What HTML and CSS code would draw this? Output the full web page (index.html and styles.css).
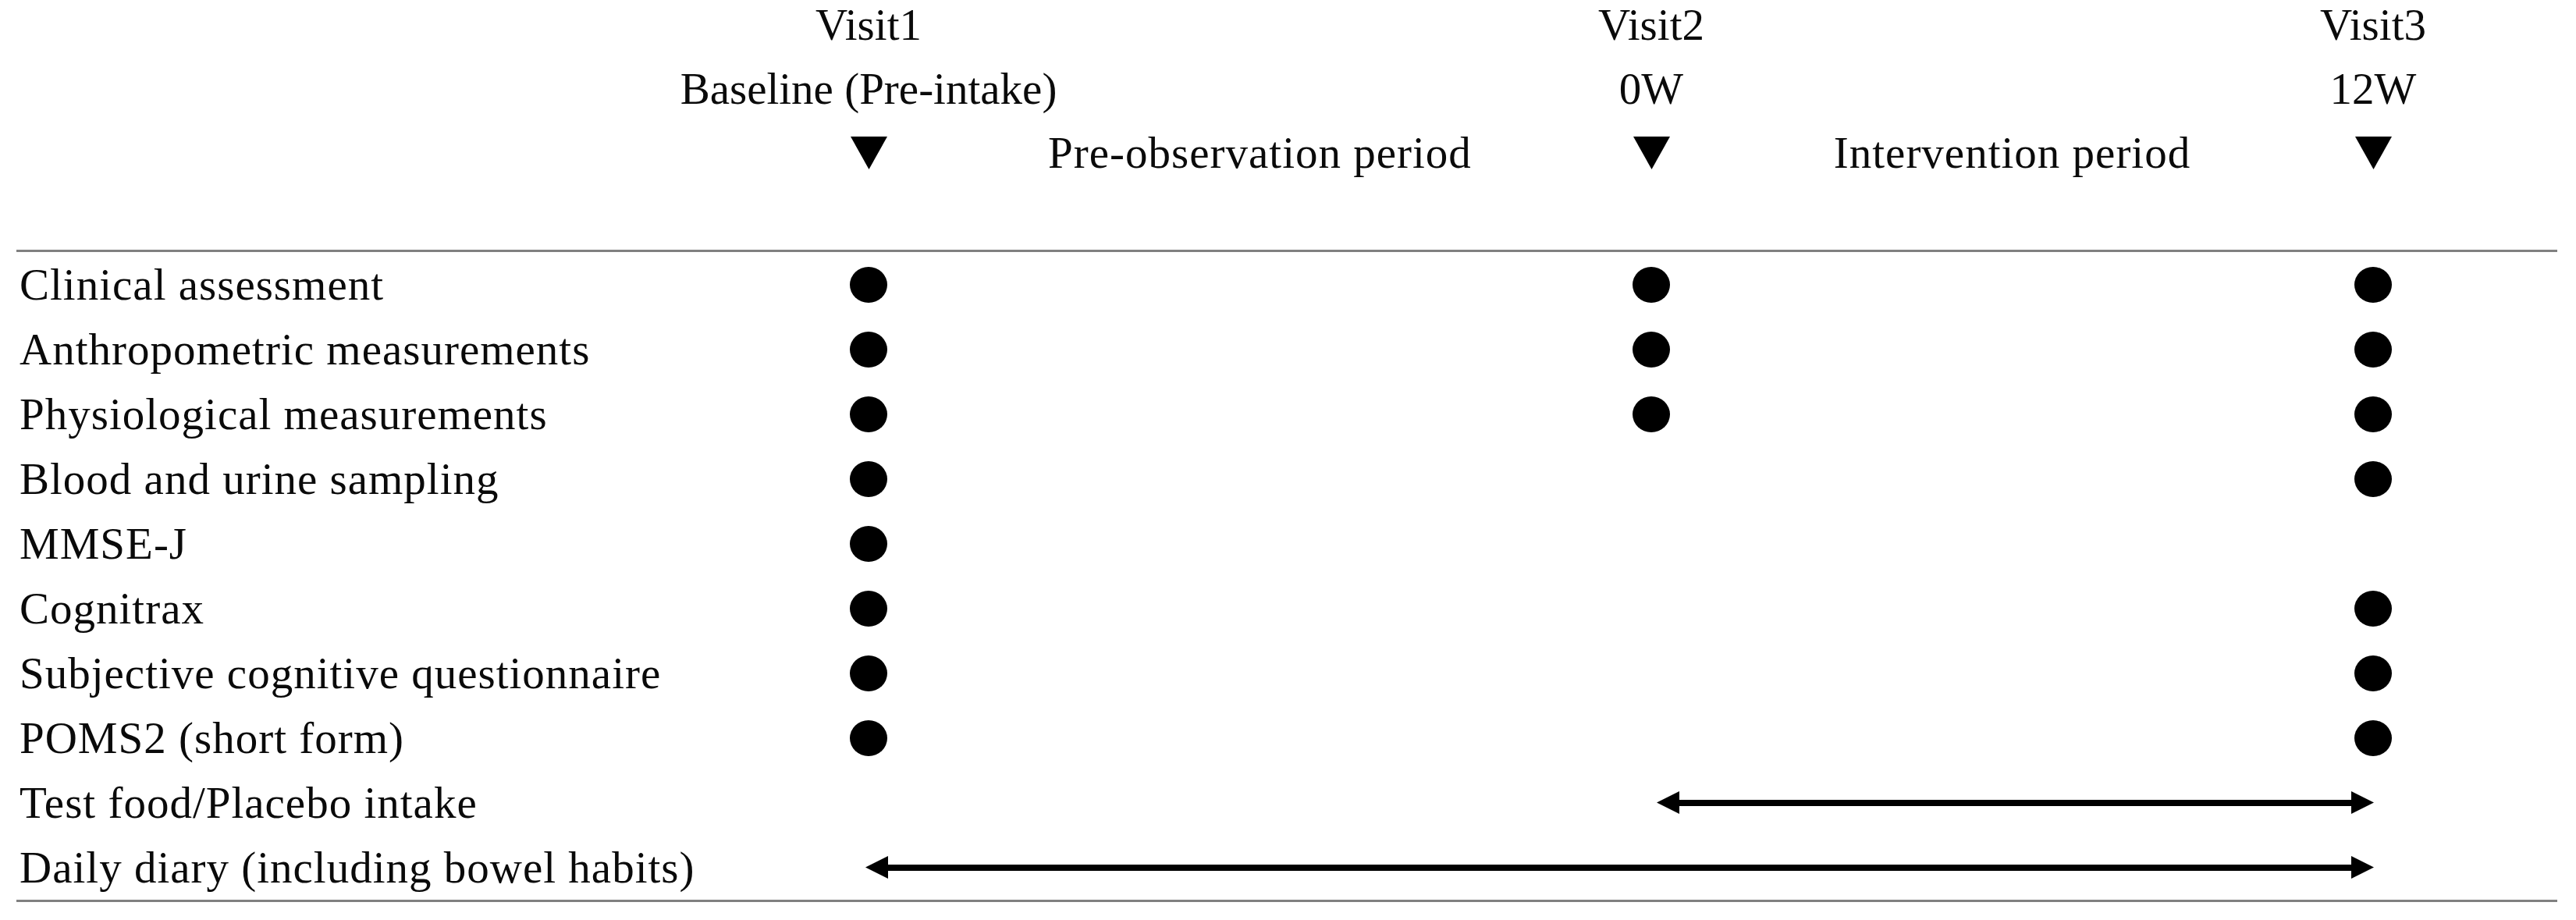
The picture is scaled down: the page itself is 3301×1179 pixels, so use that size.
FILE: index.html
```html
<!DOCTYPE html>
<html lang="en">
<head>
<meta charset="utf-8">
<title>Study schedule</title>
<link rel="stylesheet" href="styles.css">
</head>
<body>
<div class="schedule">
  <div class="head grid">
    <div class="hcell c2 r1">Visit1</div>
    <div class="hcell c4 r1">Visit2</div>
    <div class="hcell c6 r1">Visit3</div>
    <div class="hcell c2 r2">Baseline (Pre-intake)</div>
    <div class="hcell c4 r2">0W</div>
    <div class="hcell c6 r2">12W</div>
    <div class="hcell c2 r3"><svg class="tri" width="47" height="42" viewBox="0 0 47 42"><polygon points="0,0 47,0 23.5,42"/></svg></div>
    <div class="hcell c3 r3 period">Pre-observation period</div>
    <div class="hcell c4 r3"><svg class="tri" width="47" height="42" viewBox="0 0 47 42"><polygon points="0,0 47,0 23.5,42"/></svg></div>
    <div class="hcell c5 r3 period">Intervention period</div>
    <div class="hcell c6 r3"><svg class="tri" width="47" height="42" viewBox="0 0 47 42"><polygon points="0,0 47,0 23.5,42"/></svg></div>
  </div>
  <div class="table">
    <div class="row grid"><div class="label">Clinical assessment</div><span class="dot c2"></span><span class="dot c4"></span><span class="dot c6"></span></div>
    <div class="row grid"><div class="label">Anthropometric measurements</div><span class="dot c2"></span><span class="dot c4"></span><span class="dot c6"></span></div>
    <div class="row grid"><div class="label">Physiological measurements</div><span class="dot c2"></span><span class="dot c4"></span><span class="dot c6"></span></div>
    <div class="row grid"><div class="label">Blood and urine sampling</div><span class="dot c2"></span><span class="dot c6"></span></div>
    <div class="row grid"><div class="label">MMSE-J</div><span class="dot c2"></span></div>
    <div class="row grid"><div class="label">Cognitrax</div><span class="dot c2"></span><span class="dot c6"></span></div>
    <div class="row grid"><div class="label">Subjective cognitive questionnaire</div><span class="dot c2"></span><span class="dot c6"></span></div>
    <div class="row grid"><div class="label">POMS2 (short form)</div><span class="dot c2"></span><span class="dot c6"></span></div>
    <div class="row grid"><div class="label">Test food/Placebo intake</div>
      <div class="arrow span-intake">
        <svg class="head-l" width="29" height="29" viewBox="0 0 29 29"><polygon points="0,14.5 29,0 29,29"/></svg>
        <span class="shaft"></span>
        <svg class="head-r" width="29" height="29" viewBox="0 0 29 29"><polygon points="29,14.5 0,0 0,29"/></svg>
      </div>
    </div>
    <div class="row grid"><div class="label">Daily diary (including bowel habits)</div>
      <div class="arrow span-diary">
        <svg class="head-l" width="29" height="29" viewBox="0 0 29 29"><polygon points="0,14.5 29,0 29,29"/></svg>
        <span class="shaft"></span>
        <svg class="head-r" width="29" height="29" viewBox="0 0 29 29"><polygon points="29,14.5 0,0 0,29"/></svg>
      </div>
    </div>
  </div>
</div>
</body>
</html>
```
FILE: styles.css
```css
html, body {
  margin: 0;
  padding: 0;
  background: #ffffff;
}

body {
  font-family: "Liberation Serif", "Times New Roman", serif;
  font-size: 57px;
  color: #0a0a0a;
}

.schedule {
  width: 3256px;
  padding-left: 21px;
}

.grid {
  display: grid;
  grid-template-columns: 1042px 100px 903px 100px 825px 100px 186px;
}

.head {
  grid-template-rows: 64px 100px 64px;
  margin-bottom: 92px;
}

.hcell {
  justify-self: center;
  white-space: nowrap;
  display: flex;
  align-items: center;
  justify-content: center;
}

.period {
  letter-spacing: 1px;
}

.r1 { grid-row: 1; line-height: 64px; }
.r2 { grid-row: 2; line-height: 100px; }
.r3 { grid-row: 3; line-height: 64px; }

.c2 { grid-column: 2; }
.c3 { grid-column: 3; }
.c4 { grid-column: 4; }
.c5 { grid-column: 5; }
.c6 { grid-column: 6; }

.tri polygon {
  fill: #000000;
}

.table {
  border-top: 3px solid #808080;
  border-bottom: 3px solid #808080;
}

.row {
  height: 83px;
  align-items: center;
  line-height: 83px;
}

.label {
  grid-column: 1;
  grid-row: 1;
  padding-left: 4px;
  white-space: nowrap;
  letter-spacing: 1px;
}

.dot {
  grid-row: 1;
  justify-self: center;
  width: 48px;
  height: 46px;
  border-radius: 50%;
  background: #000000;
}

.arrow {
  grid-row: 1;
  display: flex;
  align-items: center;
  height: 29px;
}

.span-intake {
  grid-column: 4 / 7;
  padding-left: 57px;
  padding-right: 49px;
}

.span-diary {
  grid-column: 2 / 7;
  padding-left: 46px;
  padding-right: 49px;
}

.arrow svg {
  flex: none;
  display: block;
}

.arrow polygon {
  fill: #000000;
}

.shaft {
  flex: 1;
  height: 8px;
  background: #000000;
}
```
